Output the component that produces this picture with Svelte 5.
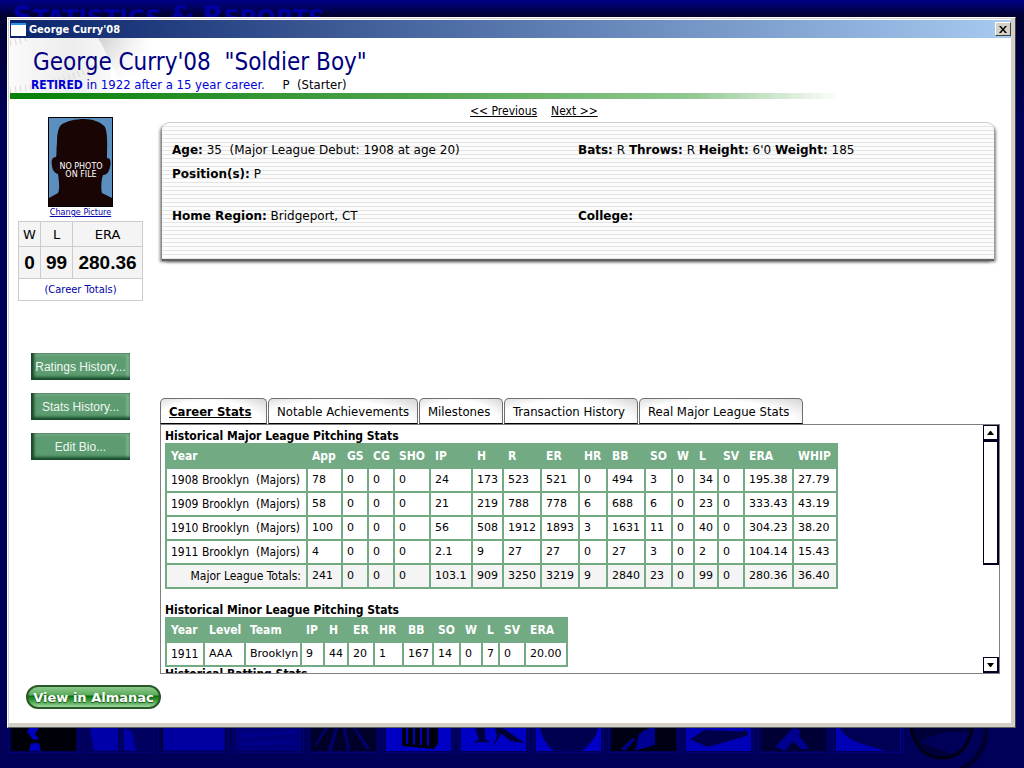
<script>
  const tabs = [
    { label: 'Career Stats', width: 107 },
    { label: 'Notable Achievements', width: 150 },
    { label: 'Milestones', width: 84 },
    { label: 'Transaction History', width: 134 },
    { label: 'Real Major League Stats', width: 164 }
  ];
  let active = $state(0);

  const major = {
    title: 'Historical Major League Pitching Stats',
    widths: [141, 35, 26, 26, 36, 42, 31, 38, 38, 28, 38, 27, 22, 24, 26, 49, 44],
    head: ['Year', 'App', 'GS', 'CG', 'SHO', 'IP', 'H', 'R', 'ER', 'HR', 'BB', 'SO', 'W', 'L', 'SV', 'ERA', 'WHIP'],
    rows: [
      ['1908 Brooklyn \u00a0(Majors)', '78', '0', '0', '0', '24', '173', '523', '521', '0', '494', '3', '0', '34', '0', '195.38', '27.79'],
      ['1909 Brooklyn \u00a0(Majors)', '58', '0', '0', '0', '21', '219', '788', '778', '6', '688', '6', '0', '23', '0', '333.43', '43.19'],
      ['1910 Brooklyn \u00a0(Majors)', '100', '0', '0', '0', '56', '508', '1912', '1893', '3', '1631', '11', '0', '40', '0', '304.23', '38.20'],
      ['1911 Brooklyn \u00a0(Majors)', '4', '0', '0', '0', '2.1', '9', '27', '27', '0', '27', '3', '0', '2', '0', '104.14', '15.43']
    ],
    totals: ['Major League Totals:', '241', '0', '0', '0', '103.1', '909', '3250', '3219', '9', '2840', '23', '0', '99', '0', '280.36', '36.40']
  };
  const minor = {
    title: 'Historical Minor League Pitching Stats',
    widths: [38, 41, 56, 23, 24, 26, 29, 30, 27, 22, 17, 26, 42],
    head: ['Year', 'Level', 'Team', 'IP', 'H', 'ER', 'HR', 'BB', 'SO', 'W', 'L', 'SV', 'ERA'],
    rows: [['1911', 'AAA', 'Brooklyn', '9', '44', '20', '1', '167', '14', '0', '7', '0', '20.00']],
    totals: null
  };
  const sum = (list) => list.reduce((a, b) => a + b, 0);

  const tiles = [
    { bg: '#000008', shapes: ['M18 0h10l-4 6 4 6h-6l-6-8zM20 16h8l2 8H18z'], fill: '#0000c0' },
    { bg: '#000060', shapes: ['M4 0h28v24H8zM38 0l8 4 4 20H38z'], fill: '#0000a8' },
    { bg: '#000030', shapes: ['M2 0h62v24H2z'], fill: '#0000a0' },
    { bg: '#00007c', shapes: ['M4 6l58-3v3L4 10zM4 16l58-3v2L4 19z'], fill: '#00008c' },
    { bg: '#000028', shapes: ['M32 0h3l4 24h-3zM24 0h3l-6 24h-4zM42 0h3l14 22h-4zM14 0h3L4 20V16z'], fill: '#000070' },
    { bg: '#0000c4', shapes: ['M16 0h4v18h-4zM22 0h5v19h-5zM29 0h5v20h-5zM36 0h5v21h-5zM43 0h9v16l-4 6-5-1zM16 16l32 3v3l-32-3z'], fill: '#00000c' },
    { bg: '#0000c4', shapes: ['M14 0h10v12l6 3H12l6-3zM34 0h8l22 16-14-2-10-8-8 14 4-12z'], fill: '#000038' },
    { bg: '#0000c4', shapes: ['M4 0h58c-2 12-10 18-16 24H18C10 18 6 10 4 0z'], fill: '#000050' },
    { bg: '#000014', shapes: ['M28 6l10-6h6v18l-20 6zM10 22L22 10l2 2-10 12z'], fill: '#000090' },
    { bg: '#0000b8', shapes: ['M4 12l14-10 44 2v4L22 20zM38 0l6 6 16-4v3l-18 4z'], fill: '#000048' },
    { bg: '#000034', shapes: ['M14 20L32 0l8 2-2 6 10 14h-8l-8-8-8 10z'], fill: '#000090' },
    { bg: '#0000b4', shapes: ['M4 0h60v24H50C30 18 10 14 4 0z'], fill: '#000054' }
  ];
</script>

{#snippet statTable(t)}
  <h2>{t.title}</h2>
  <table class="stats" style:width="{sum(t.widths) + 1}px">
    <colgroup>
      {#each t.widths as w}<col style:width="{w}px" />{/each}
    </colgroup>
    <thead>
      <tr>{#each t.head as h}<th scope="col">{h}</th>{/each}</tr>
    </thead>
    <tbody>
      {#each t.rows as row}
        <tr>{#each row as cell}<td>{cell}</td>{/each}</tr>
      {/each}
    </tbody>
    {#if t.totals}
      <tfoot>
        <tr>{#each t.totals as cell}<td>{cell}</td>{/each}</tr>
      </tfoot>
    {/if}
  </table>
{/snippet}

<div class="desktop">
  <div class="backdrop-title"><span>S</span>tatistics <span>&amp;</span> <span>R</span>eports</div>

  <section class="window" aria-label="George Curry'08">
    <div class="titlebar">
      <svg width="15" height="13" viewBox="0 0 15 13" aria-hidden="true">
        <rect width="15" height="13" fill="#fff" /><rect width="15" height="2" fill="#2a8fe8" />
      </svg>
      <span class="caption">George Curry'08</span>
      <button class="close" aria-label="Close">
        <svg width="8" height="7" viewBox="0 0 8 7" aria-hidden="true"><path d="M0 0h2l2 2.400L6 0h2L5 3.500 8 7H6L4 4.600 2 7H0l3-3.500z" fill="#000" /></svg>
      </button>
    </div>

    <header>
      <svg class="ball" width="150" height="55" viewBox="0 0 150 55" aria-hidden="true">
        <defs>
          <linearGradient id="fade" x1="0" x2="1"><stop offset="0" stop-color="#fafafa" /><stop offset=".6" stop-color="#ededed" /><stop offset="1" stop-color="#f8f8f8" /></linearGradient>
          <linearGradient id="shade" x1="0" y1="0" x2=".5" y2="1"><stop offset="0" stop-color="#cfcfcf" /><stop offset="1" stop-color="#fff" /></linearGradient>
          <linearGradient id="edge" x1="0" x2="1"><stop offset=".6" stop-color="#fff" stop-opacity="0" /><stop offset=".95" stop-color="#fff" /></linearGradient>
        </defs>
        <path d="M86 0h64v36l-40 6z" fill="url(#shade)" />
        <path d="M0 0h88q16 24 12 55H0z" fill="url(#fade)" />
        <path d="M0 5q10-1 16-5M0 52q54-6 92-27" fill="none" stroke="#dcd8d5" stroke-width="6" stroke-dasharray="1 4" />
        <rect width="150" height="55" fill="url(#edge)" />
      </svg>
      <h1>George Curry'08&nbsp; "Soldier Boy"</h1>
      <p class="status"><span class="career"><b>RETIRED</b> in 1922 after a 15 year career.</span> <span class="role">P&nbsp; (Starter)</span></p>
    </header>
    <div class="rule"></div>

    <div class="body">
      <aside>
        <figure>
          <svg width="65" height="90" viewBox="0 0 65 90" role="img" aria-label="No photo on file">
            <rect x=".5" y=".5" width="64" height="89" fill="#5a8fc0" stroke="#000" />
            <path d="M1 89V81l9-5c2-3 1-12 0-19-4-1-6-5-6-9-1-4 0-8 4-8 1-3 0-8 1-14 0-8 1-15 4-18C18 4 28 2 36 2c9 0 17 3 21 8 3 7 2 20 2 31 4 0 4 5 3 9-1 5-3 8-7 8-2 6-2 14-1 18l10 5v8z" fill="#1a0505" />
            <text x="33" y="52">NO PHOTO</text>
            <text x="33" y="60">ON FILE</text>
          </svg>
          <figcaption><a href="#picture">Change Picture</a></figcaption>
        </figure>

        <table class="record">
          <thead><tr><th scope="col" class="w">W</th><th scope="col" class="l">L</th><th scope="col">ERA</th></tr></thead>
          <tbody>
            <tr><td>0</td><td>99</td><td>280.36</td></tr>
            <tr class="note"><td colspan="3">(Career Totals)</td></tr>
          </tbody>
        </table>

        <div class="actions">
          <button>Ratings History...</button>
          <button>Stats History...</button>
          <button>Edit Bio...</button>
        </div>
      </aside>

      <main>
        <nav><a href="#previous">&lt;&lt; Previous</a><a href="#next">Next &gt;&gt;</a></nav>

        <div class="info">
          <p><b>Age:</b> 35&nbsp; (Major League Debut: 1908 at age 20)</p>
          <p><b>Bats:</b> R <b>Throws:</b> R <b>Height:</b> 6'0 <b>Weight:</b> 185</p>
          <p class="wide"><b>Position(s):</b> P</p>
          <p class="spaced"><b>Home Region:</b> Bridgeport, CT</p>
          <p class="spaced"><b>College:</b></p>
        </div>

        <div class="tabs" role="tablist">
          {#each tabs as tab, i}
            <button role="tab" aria-selected={i === active} class:active={i === active} style:width="{tab.width}px" onclick={() => (active = i)}>{tab.label}</button>
          {/each}
        </div>

        <div class="panel">
          <div class="content">
            {@render statTable(major)}
            {@render statTable(minor)}
            <h2 class="next">Historical Batting Stats</h2>
          </div>
          <div class="scroll">
            <button aria-label="Scroll up"><svg width="7" height="4" viewBox="0 0 7 4"><path d="M3 0h1l3 4H0z" /></svg></button>
            <div class="thumb"></div>
            <button class="down" aria-label="Scroll down"><svg width="7" height="4" viewBox="0 0 7 4"><path d="M0 0h7L4 4H3z" /></svg></button>
          </div>
        </div>
      </main>
    </div>

    <footer><button class="almanac">View in Almanac</button></footer>
  </section>

  <div class="strip" aria-hidden="true">
    {#each tiles as t}
      <svg width="71" height="25" viewBox="0 0 71 25">
        <path d="M.5 0v24.500h70V0" fill="none" stroke="#000078" />
        <rect x="3" width="65" height="23" fill={t.bg} />
        {#each t.shapes as d}<path {d} fill={t.fill} transform="translate(3 0) scale(1 .95)" />{/each}
      </svg>
    {/each}
    <svg class="logo" width="80" height="41" viewBox="0 0 80 41">
      <path d="M3 0c4 20 16 30 31 30S62 20 66 0z" fill="#000038" />
      <path d="M12 14C24 6 40 2 62 4c-2 12-10 20-20 22z" fill="#000058" />
      <path d="M3 0c4 20 16 30 31 30S60 22 64 0" fill="none" stroke="#000014" stroke-width="3" />
      <path d="M79 0c-2 20-10 34-26 41" fill="none" stroke="#000030" stroke-width="5" />
    </svg>
  </div>
</div>

<style>
  :global(body) { background: #000058; }
  h1, h2, p, figure { margin: 0; font-weight: normal; }
  button { font: inherit; cursor: pointer; }
  .desktop {
    min-height: 100vh; box-sizing: border-box; padding: 0 8px 0 7px; overflow: hidden;
    background: linear-gradient(#000088, #000030 16px, #000058 120px, #000058);
    font-family: "DejaVu Sans", Verdana, sans-serif; font-size: 11px; color: #000;
  }
  .backdrop-title {
    height: 17px; box-sizing: border-box; padding: 3px 0 0 6px; overflow: hidden; white-space: nowrap;
    font-weight: bold; text-transform: uppercase; font-size: 23px; line-height: 30px;
    color: #0000a0;
  }
  .backdrop-title span { font-size: 28px; line-height: 28px; }
  .window { background: #fff; border: 1px solid; border-color: #fff #404040 #606060 #fff; box-shadow: inset 0 0 0 1px #d4d0c8, inset -4px -4px 0 #d4d0c8; padding: 2px 4px 5px 2px; }
  .titlebar {
    display: flex; align-items: center; height: 18px; padding: 0 0 0 1px; gap: 3px;
    background: linear-gradient(90deg, #0a246a, #a6caf0);
    color: #fff; font: bold 11px "DejaVu Sans Condensed", Tahoma, sans-serif;
  }
  .caption { flex: 1; }
  .close {
    display: flex; align-items: center; justify-content: center; width: 16px; height: 14px; padding: 0;
    background: #d4d0c8; border: 1px solid; border-color: #fff #404040 #404040 #fff;
  }
  header { position: relative; height: 55px; box-sizing: border-box; padding: 8px 0 0 21px; }
  .ball { position: absolute; left: 0; top: 0; }
  h1 { position: relative; padding-left: 2px; font: 24px/32px "DejaVu Sans Condensed", Tahoma, sans-serif; color: #000080; white-space: nowrap; }
  .status { position: relative; font: 13px/14px "DejaVu Sans Condensed", Tahoma, sans-serif; }
  .status b { font-size: 12px; }
  .career { color: #0000d8; }
  .role { margin-left: 14px; }
  .rule { height: 6px; background: linear-gradient(90deg, #058005, #52a552 42%, #90c890 68%, #fff 83%); }

  .body { display: grid; grid-template-columns: 150px minmax(0, 1fr); }
  aside { display: flex; flex-direction: column; padding: 18px 0 0 8px; }
  figure { width: 125px; text-align: center; line-height: 0; }
  figure text { font: 8px "DejaVu Sans", sans-serif; fill: #fff; text-anchor: middle; }
  figcaption { font: 9px/10px "DejaVu Sans Condensed", Tahoma, sans-serif; height: 14px; }
  figcaption a { color: #0000a8; }
  .record { width: 125px; table-layout: fixed; border-collapse: collapse; text-align: center; }
  .record th, .record td { padding: 0; border: 1px solid #ccc; background: #f4f4f4; }
  .record th { height: 24px; font-weight: normal; font-size: 13px; }
  .record .w { width: 21px; }
  .record .l { width: 31px; }
  .record td { height: 31px; font: bold 19px "Liberation Sans", Arial, sans-serif; }
  .record .note td { height: 21px; background: #fff; border-top-color: #888; font: 11px "DejaVu Sans Condensed", Tahoma, sans-serif; color: #0000a8; }
  .actions { display: flex; flex-direction: column; gap: 13px; padding: 52px 0 0 13px; width: 99px; }
  .actions button {
    height: 27px; padding: 0; border: 0; color: #f0f8f2; white-space: nowrap;
    font: 12px "Liberation Sans", Arial, sans-serif; background: #5c9c70;
    box-shadow: inset 3px 0 3px #1c4428, inset 0 -3px 3px #1c5030, inset -3px 2px 3px #8cc09c;
  }
  main { padding-right: 11px; }
  nav { display: flex; gap: 14px; padding: 4px 0 0 310px; font: 12px/16px "DejaVu Sans Condensed", Tahoma, sans-serif; height: 19px; }
  nav a { color: #000; }
  .info {
    display: grid; grid-template-columns: 406px 1fr; align-content: start; height: 139px; margin: 0 6px 0 2px;
    padding: 15px 0 0 10px; box-sizing: border-box;
    font-size: 12px; line-height: 24px;
    border-radius: 8px 8px 0 0; border-top: 1px solid #ccc; border-bottom: 2px solid #606060;
    background: repeating-linear-gradient(#fcfcfc 0 3px, #e4e4e4 3px 4px);
    box-shadow: -3px 2px 3px -1px #777, 3px 2px 3px -1px #888;
  }
  .info p { white-space: nowrap; }
  .info .wide { grid-column: 1 / -1; }
  .info .spaced { margin-top: 18px; }
  .tabs { display: flex; gap: 1px; padding-top: 137px; }
  .tabs button {
    height: 26px; padding: 0 0 0 8px; text-align: left; white-space: nowrap; font: 13px "DejaVu Sans Condensed", Tahoma, sans-serif; color: #000;
    border: 1px solid #707070; border-bottom: 1px solid #000; border-radius: 5px 5px 0 0;
    background: radial-gradient(ellipse at 45% 100%, #fff 65%, #d4d4d4 100%);
  }
  .tabs .active { font-weight: bold; text-decoration: underline; }
  .panel { display: flex; height: 250px; box-sizing: border-box; border: 1px solid #808080; overflow: hidden; }
  .content { flex: 1; min-width: 0; padding: 5px 0 0 4px; }
  .content h2 { font: bold 12px/13px "DejaVu Sans Condensed", Tahoma, sans-serif; white-space: nowrap; }
  .stats { table-layout: fixed; border-collapse: collapse; font-size: 11px; margin-bottom: 15px; }
  .stats th, .stats td { height: 22px; padding: 0 0 0 4px; border: 2px solid #72aa84; text-align: left; white-space: nowrap; line-height: 16px; }
  .stats th { background: #72aa84; color: #fff; font: bold 12px/16px "DejaVu Sans Condensed", Tahoma, sans-serif; }
  .stats td:first-child { font-family: "DejaVu Sans Condensed", Tahoma, sans-serif; font-size: 12px; }
  tfoot td { background: #f4f4f4; }
  .stats tfoot td:first-child { text-align: right; padding: 0 5px 0 0; }
  .content .next { margin-top: -14px; }
  .scroll { display: flex; flex-direction: column; width: 16px; }
  .scroll button { display: flex; align-items: center; justify-content: center; height: 16px; padding: 0; background: #fff; border: 1px solid #000020; border-width: 1px 2px 2px 1px; }
  .thumb { height: 124px; box-sizing: border-box; border: 1px solid #000020; border-width: 1px 2px 2px 1px; }
  .scroll .down { margin-top: auto; }
  footer { padding: 11px 0 13px 16px; }
  .almanac {
    display: block; width: 135px; height: 24px; padding: 0; border: 2px solid #285828; border-radius: 12px; color: #fff; white-space: nowrap;
    font: bold 13px "DejaVu Sans", Verdana, sans-serif; text-shadow: 0 1px 1px #245024;
    background: linear-gradient(#8cc88c, #5cac5c 40%, #087008 45%, #50a850 75%, #a0d8a0);
  }
  .strip { display: flex; gap: 4px; padding-left: 1px; height: 41px; }
  .strip svg { flex: none; }
</style>
